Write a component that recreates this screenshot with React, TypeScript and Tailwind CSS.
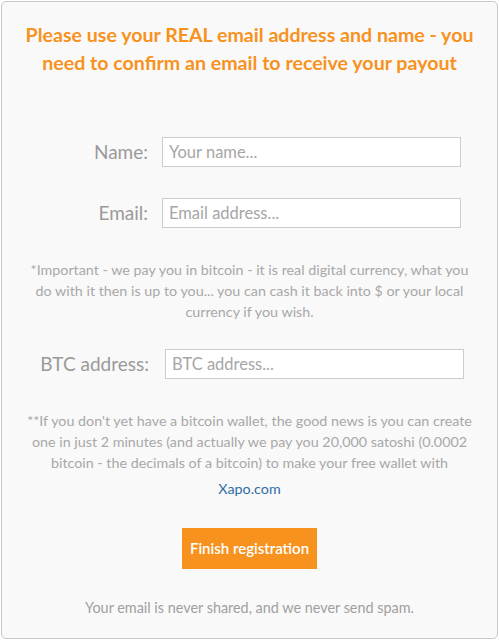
import React from 'react';

const font = { fontFamily: '"Lato", "Open Sans", sans-serif' };

const Field: React.FC<{ label: string; placeholder: string; labelClass: string }> = ({ label, placeholder, labelClass }) => (
  <div className="flex items-center">
    <label className={`${labelClass} shrink-0 text-right text-[19px] text-[#9a9a9a]`}>{label}</label>
    <input
      type="text"
      placeholder={placeholder}
      className="w-[299px] h-[30px] border border-[#cccccc] bg-white px-[6px] text-[16.5px] text-[#555] placeholder:text-[#a6a6a6] outline-none"
    />
  </div>
);

export default function App() {
  return (
    <div style={font} className="w-[500px] h-[640px] p-px">
      <div className="h-[638px] w-[497px] border border-[#c8c8c8] rounded-[5px] bg-[#f9f9f9] flex flex-col items-center">
        <h1 className="mt-[19px] px-[18px] text-center text-[19.6px] leading-[28px] font-bold text-[#f7921e]">
          Please use your REAL email address and name - you need to confirm an email to receive your payout
        </h1>

        <div className="self-stretch mt-[60px] flex flex-col gap-[31px]">
          <Field label="Name:" placeholder="Your name..." labelClass="w-[160px] pr-[14px]" />
          <Field label="Email:" placeholder="Email address..." labelClass="w-[160px] pr-[14px]" />
        </div>

        <p className="mt-[31px] px-[26px] text-center text-[14.3px] leading-[21px] text-[#a8a8a8]">
          *Important - we pay you in bitcoin - it is real digital currency, what you do with it then is up to you... you can cash it back into $ or your local currency if you wish.
        </p>

        <div className="self-stretch mt-[27px]">
          <Field label="BTC address:" placeholder="BTC address..." labelClass="w-[163px] pr-[16px]" />
        </div>

        <p className="mt-[31px] px-[20px] text-center text-[14.3px] leading-[21px] text-[#a8a8a8]">
          **If you don't yet have a bitcoin wallet, the good news is you can create one in just 2 minutes (and actually we pay you 20,000 satoshi (0.0002 bitcoin - the decimals of a bitcoin) to make your free wallet with
        </p>
        <a href="#" className="mt-[5px] text-[14.3px] leading-[21px] text-[#2e6da4]">Xapo.com</a>

        <button className="mt-[29px] h-[41px] px-[8px] bg-[#f7921e] text-white text-[15px] font-semibold">
          Finish registration
        </button>

        <p className="mt-[28px] text-[14.4px] leading-[21px] text-[#a0a0a0]">
          Your email is never shared, and we never send spam.
        </p>
      </div>
    </div>
  );
}
